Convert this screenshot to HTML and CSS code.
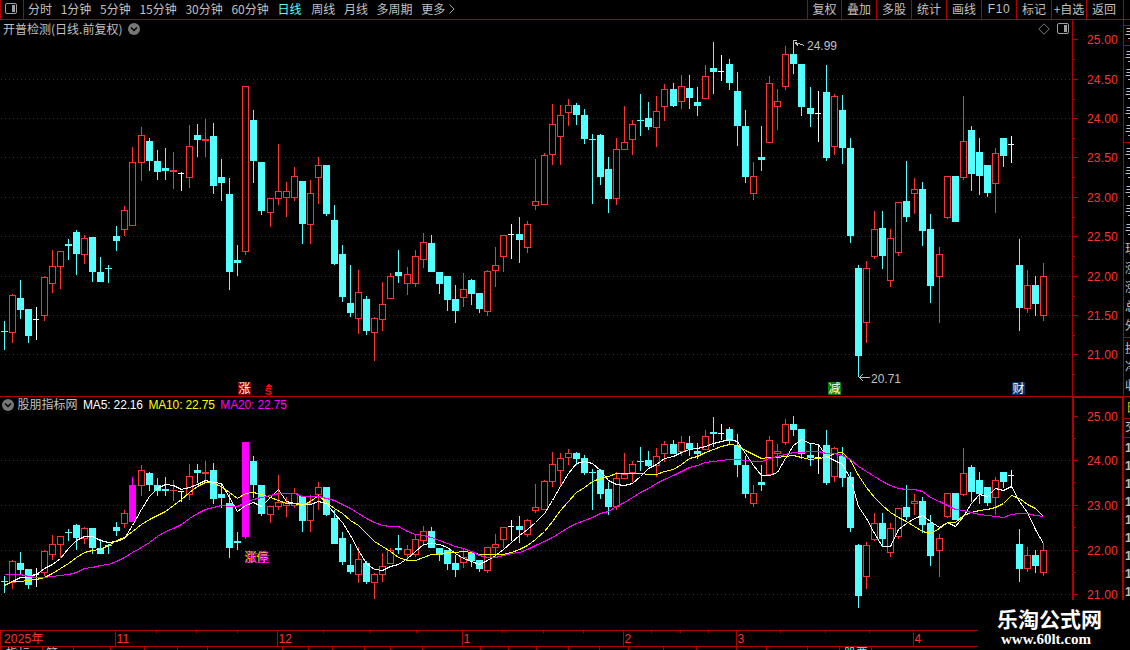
FILE: index.html
```html
<!DOCTYPE html>
<html lang="zh-CN">
<head>
<meta charset="utf-8">
<title>日线</title>
<link rel="stylesheet" href="styles.css">
</head>
<body>
<div class="app">
  <header class="toolbar">
    <div class="toggle"><svg width="13" height="12" viewBox="0 0 13 12"><rect class="icon-line" x=".5" y=".5" width="11" height="10" rx="1.5"/><rect class="icon-fill" x="7" y="2" width="3" height="7"/></svg></div>
    <nav class="periods">
      <span>分时</span><span>1分钟</span><span>5分钟</span><span>15分钟</span><span>30分钟</span><span>60分钟</span><span class="active">日线</span><span>周线</span><span>月线</span><span>多周期</span><span class="more">更多<svg width="6" height="10" viewBox="0 0 6 10"><path class="icon-line" d="M.5 .5L5 5L.5 9.5"/></svg></span>
    </nav>
    <nav class="tools">
      <span class="first">复权</span><span>叠加</span><span>多股</span><span>统计</span><span>画线</span><span class="latin">F10</span><span>标记</span><span>+自选</span><span class="last">返回</span>
    </nav>
  </header>
  <div class="workspace">
    <main class="charts">
      <section class="panel price">
        <svg id="price" class="plot" width="1123" height="376" viewBox="0 20 1123 376"></svg>
        <div class="caption">
          <span>开普检测(日线.前复权)</span>
          <svg width="12" height="12" viewBox="0 0 12 12"><circle class="knob" cx="6" cy="6" r="6"/><path class="knob-mark" d="M3 4.5L6 7.5L9 4.5"/></svg>
          <span class="caption-tools">
            <svg width="12" height="12" viewBox="0 0 12 12"><path class="icon-dim" d="M6 .8L11.2 6L6 11.2L.8 6Z"/></svg>
            <svg width="13" height="12" viewBox="0 0 13 12"><rect class="icon-line" x=".5" y=".5" width="11" height="10" rx="1.5"/><rect class="icon-fill" x="7" y="2" width="3" height="7"/></svg>
          </span>
        </div>
      </section>
      <section class="panel study">
        <svg id="study" class="plot" width="1123" height="254" viewBox="0 396 1123 254"></svg>
        <div class="caption">
          <svg width="12" height="12" viewBox="0 0 12 12"><circle class="knob" cx="6" cy="6" r="6"/><path class="knob-mark" d="M3 4.5L6 7.5L9 4.5"/></svg>
          <span>股朋指标网</span><span class="ma5">MA5: 22.16</span><span class="ma10">MA10: 22.75</span><span class="ma20">MA20: 22.75</span>
        </div>
      </section>
    </main>
    <aside class="quote">
      <div class="quote-head"></div>
      <div class="quote-name">手</div>
      <div class="quote-list"><span>手</span><span>手</span><span>手</span><span>手</span><span>手</span></div>
      <div class="quote-list"><span>手</span><span>手</span><span>手</span><span>手</span><span>手</span><span>现</span><span>涨</span><span>涨</span><span>总</span><span>外</span></div>
      <div class="quote-list tail"><span>换</span><span>净</span><span>收</span></div>
      <div class="quote-tab">日</div>
      <div class="quote-deal">交</div>
      <div class="quote-times"><span>1</span><span>1</span><span>1</span><span>1</span><span>1</span><span>1</span><span>1</span><span>1</span><span>1</span></div>
    </aside>
  </div>
  <div class="brand"><strong>乐淘公式网</strong><b>www.60lt.com</b></div>
</div>
<script src="chart.js"></script>
</body>
</html>
```
FILE: styles.css
```css
* { box-sizing: border-box; }
body { margin: 0; background: #000; }
.app {
  position: relative; width: 1130px; height: 650px; overflow: hidden;
  background: #000; color: #c0c0c0;
  font: 12px/16px "Liberation Sans", "Noto Sans CJK SC", sans-serif;
}
.toolbar { display: flex; height: 20px; border-bottom: 1px solid #b00000; }
.toggle { width: 24px; padding: 3px 0 0 4px; border: solid #b00000; border-width: 0 1px; line-height: 0; }
.periods { display: flex; gap: 8.7px; padding: 1px 0 0 4px; flex: 1; white-space: nowrap; font-family: "Noto Sans CJK SC", sans-serif; }
.periods .active { color: #54ffff; margin-right: 1px; }
.more svg { margin-left: 4px; }
.tools { display: flex; width: 323px; text-align: center; font-family: "Noto Sans CJK SC", sans-serif; white-space: nowrap; }
.tools span { width: 35px; flex: none; padding-top: 1px; border-left: 1px solid #b00000; }
.tools .first { width: 34px; }
.tools .last { width: 38px; padding-right: 2px; border-right: 1px solid #b00000; }
.tools .latin { font-family: "Liberation Sans", sans-serif; letter-spacing: .6px; }
.icon-line { fill: none; stroke: #a0a0a0; }
.icon-dim { fill: none; stroke: #777; }
.icon-fill { fill: #a0a0a0; }
.knob { fill: #777; }
.knob-mark { fill: none; stroke: #000; stroke-width: 1.5; }

.workspace { display: grid; grid-template-columns: 1123px 7px; height: 630px; }
.charts { display: grid; grid-template-rows: 376px 254px; }
.panel { display: grid; }
.panel > * { grid-area: 1 / 1; }
.plot { display: block; overflow: hidden; shape-rendering: crispEdges; }
.caption { display: flex; align-items: center; align-self: start; height: 18px; z-index: 1; white-space: nowrap; }
.price .caption { gap: 6px; padding-left: 3px; font-family: "Noto Sans CJK SC", sans-serif; }
.caption-tools { display: flex; gap: 7px; margin-left: auto; padding-right: 53px; }
.study .caption { gap: 5.5px; padding-left: 2px; }
.study .caption svg { margin-right: -2px; }
.ma5, .ma10, .ma20 { letter-spacing: -.15px; }
.ma5 { color: #fff; }
.ma10 { color: #ff0; }
.ma20 { color: #f0f; }

.plot text { font: 12px "Liberation Sans", "Noto Sans CJK SC", sans-serif; }
.rule { fill: #b00000; }
.grid { stroke: #b00000; stroke-dasharray: 1 3; }
.scale { fill: #ff3232; letter-spacing: .15px; }
.up { fill: none; stroke: #ff3232; }
.up-fill { fill: #ff3232; }
.down { fill: #54ffff; }
.flat { fill: #fff; }
.signal { fill: #f0f; }
.line { fill: none; stroke-width: 1; }
.line5 { stroke: #fff; }
.line10 { stroke: #ff0; }
.line20 { stroke: #f0f; }
.note { fill: #c0c0c0; }
.pointer { fill: none; stroke: #c0c0c0; }
.badge-rise { fill: #800000; }
.badge-cut { fill: #008000; }
.badge-report { fill: #003468; }
.badge-text { fill: #fff; }
.event { fill: none; stroke: #f00; stroke-width: 1.6; shape-rendering: geometricPrecision; }
.event-tip { fill: #f00; }
.tag-under { fill: #ff0; }
.tag-over { fill: #f0f; }

.quote { display: flex; flex-direction: column; overflow: hidden; height: 580px; border-left: 1px solid #b00000; }
.quote > div { flex: none; width: 30px; padding-left: 1px; border-bottom: 1px solid #b00000; }
.quote-head { height: 6px; }
.quote-name { height: 20px; }
.quote-list { height: 97px; display: flex; flex-direction: column; justify-content: space-evenly; }
.quote-list + .quote-list { height: 195px; }
.quote-list + .quote-list.tail { height: 59px; }
.quote > .quote-tab { height: 22px; padding-left: 2px; color: #cc0; line-height: 22px; }
.quote-deal { height: 19px; }
.quote > .quote-times { border: 0; display: flex; flex-direction: column; padding-top: 1px; font-weight: 700; }
.quote-times span { height: 18px; line-height: 18px; }

.brand {
  position: absolute; left: 978px; top: 600px; width: 152px; height: 50px;
  padding: 5px 0 0 19px; background: #000; color: #fff; white-space: nowrap;
}
.brand strong { display: block; font: 700 21px/27px "Noto Sans CJK SC", sans-serif; }
.brand b { display: block; padding-left: 4px; font: 700 15px/14px "Liberation Serif", serif; }
```
FILE: chart.js
```javascript
// Each bar: x centre, high, body top, body bottom, low, kind (u up, d down, f flat)
const bars = `4 321 331 332 350 d|12 294 295 333 343 u|20 280 298 310 319 d|28 309 309 336 343 d|36 307 319 320 340 f|44 276 277 316 321 u|52 250 266 284 293 u|60 251 251 267 289 u|68 239 244 246 260 d|76 230 232 254 275 d|84 235 238 255 264 u|92 237 237 272 282 d|100 257 272 282 282 d|108 265 268 269 283 d|116 226 236 241 251 d|124 206 210 230 236 u|132 147 162 226 226 u|141 127 135 163 181 u|149 138 141 161 171 d|157 150 161 172 180 d|165 148 168 171 180 d|173 152 170 172 189 u|181 172 173 174 191 f|189 125 146 178 188 u|197 124 135 140 157 d|205 119 139 141 157 u|213 123 136 186 194 d|221 159 177 183 201 d|229 178 194 272 290 d|237 245 260 263 276 d|245 86 86 252 255 u|253 110 120 161 183 d|261 162 162 211 215 d|270 198 198 213 227 u|278 144 191 199 205 u|286 182 191 198 217 u|294 167 176 198 201 u|302 181 181 224 244 d|310 180 193 225 244 u|318 157 165 178 204 u|326 165 165 214 216 d|334 205 220 264 265 d|342 245 254 297 302 d|350 265 303 313 317 d|358 270 292 319 334 u|366 296 299 331 335 d|374 317 318 333 361 u|382 282 304 320 331 u|390 273 276 299 299 u|398 250 272 276 283 d|407 267 274 284 295 u|415 250 256 284 287 u|423 233 242 260 268 u|431 235 243 272 272 d|439 272 272 284 294 d|447 276 276 300 311 d|455 285 299 311 323 d|463 273 289 298 307 u|471 279 280 294 305 d|479 293 293 309 313 d|487 270 271 312 316 u|495 247 265 271 287 u|503 235 235 257 272 u|511 224 234 235 259 f|519 217 234 240 263 d|527 221 224 248 253 u|535 159 201 206 210 u|544 153 155 205 205 u|552 104 124 155 165 u|560 105 115 137 165 u|568 99 105 113 126 u|576 103 105 115 125 d|584 109 115 139 144 d|592 134 139 140 204 d|600 134 135 177 185 d|608 157 169 199 213 d|616 138 149 199 205 u|624 106 142 150 150 u|632 120 124 140 155 u|640 94 120 121 136 d|648 102 118 127 130 d|656 96 111 128 147 u|664 84 89 107 121 u|673 83 89 106 107 d|681 75 86 102 109 u|689 75 88 98 109 d|697 87 102 106 116 d|705 65 76 99 99 u|713 42 68 72 94 d|721 55 71 72 81 f|729 59 64 83 90 d|737 72 91 126 146 d|745 110 126 177 183 d|753 162 176 194 200 u|761 126 157 160 171 d|769 76 83 143 143 u|777 89 101 107 130 u|785 46 54 87 90 u|793 40 54 64 74 d|801 64 64 107 116 d|810 87 108 114 127 d|818 91 113 114 142 f|826 65 92 158 161 d|834 94 96 147 155 u|842 95 110 148 164 d|850 138 148 236 243 d|858 265 268 356 377 d|866 261 268 323 343 u|874 211 229 257 259 u|882 211 228 256 269 d|890 229 238 281 287 u|898 202 202 253 256 u|906 161 201 217 222 d|914 178 189 194 214 u|922 182 189 231 246 d|930 214 229 286 303 d|939 247 254 277 323 u|947 176 176 218 219 u|955 176 176 222 222 d|963 96 141 178 180 u|971 126 130 174 191 d|979 138 152 176 195 d|987 165 165 193 197 d|995 148 153 184 213 u|1003 138 138 156 167 d|1011 136 144 145 163 f|1019 239 265 308 331 d|1027 270 285 309 313 u|1035 276 285 304 316 d|1043 263 276 316 321 u`
  .split('|').map(s => { const p = s.split(' '); return [...p.slice(0, 5).map(Number), p[5]]; });

const rect = (cls, x, y, w, h) => h > 0 ? `<rect class="${cls}" x="${x}" y="${y}" width="${w}" height="${h}"/>` : '';
const label = (cls, x, y, s) => `<text class="${cls}" x="${x}" y="${y}">${s}</text>`;
const scaleY = y => 460.2 + (y - 118) * 0.5686;
const low = y => Math.round(scaleY(y - 1)) + 1;
const high = y => Math.round(scaleY(y));

function candle(x, h, t, b, l, kind) {
  if (kind === 'u') {
    return rect('up-fill', x, h, 1, t - h) + rect('up-fill', x, b, 1, l - b) +
      (b - t < 3 ? rect('up-fill', x - 3, t, 7, b - t)
        : `<rect class="up" x="${x - 2.5}" y="${t + .5}" width="6" height="${b - t - 1}"/>`);
  }
  const cls = { d: 'down', f: 'flat', s: 'signal' }[kind];
  return rect(cls, x, h, 1, l - h) + rect(cls, x - 3, t, kind === 'f' ? 6 : 7, b - t);
}
const gridLine = y => `<path class="grid" d="M1 ${y + .5}H1072"/>`;

// Price panel
const marks = [39, 79, 118, 157, 197, 236, 276, 315, 354];
let out = marks.slice(1).map(gridLine).join('');
out += bars.map(b => candle(...b)).join('');
out += rect('rule', 1072, 20, 1, 376);
marks.forEach((y, i) => {
  out += rect('rule', 1073, y, 5, 1) + rect('rule', 1073, y + 20, 2, 1) +
    label('scale', 1087, y + 5, (25 - i * .5).toFixed(2));
});
out += '<path class="pointer" d="M804.5 45.5L795 42.5M793 43V40.5H797M795 42L798 46"/>' + label('note', 807, 50, '24.99');
out += '<path class="pointer" d="M870 377.5H859M863 374L859.5 377.5L863 381"/>' + label('note', 871, 383, '20.71');
[['rise', 238, '涨'], ['cut', 828, '减'], ['report', 1012, '财']].forEach(([k, x, s]) => {
  out += rect('badge-' + k, x, 382, 13, 13) + label('badge-text', x + .5, 393, s);
});
out += '<path class="event-tip" d="M265 387L268.5 383.5L272 387Z"/><path class="event" d="M271.3 389.6Q270.6 388.4 268.5 388.4Q266.3 388.4 266.3 389.8Q266.3 391 268.6 391.3Q271 391.7 271 393Q271 394.3 268.6 394.3Q266.3 394.3 265.7 393"/>';
document.getElementById('price').innerHTML = out;

// Study panel
out = [460, 505, 550, 594].map(gridLine).join('');
out += bars.map(([x, h, t, b, l, k]) =>
  candle(x, high(h), high(t), Math.max(low(b), high(t) + 1), low(l), x === 132 || x === 245 ? 's' : k)).join('');

const closes = bars.map(([, , t, b, , k]) => scaleY(k === 'u' ? t : b - 1));
function average(n, lead) {
  return bars.map((b, i) => {
    const y = i < n - 1 ? lead[i] : closes.slice(i - n + 1, i + 1).reduce((s, v) => s + v, 0) / n;
    return `${b[0] + .5},${Math.round(y) + .5}`;
  }).join(' ');
}
const curve = (n, lead) => `<polyline class="line line${n}" points="${average(n, lead)}"/>`;
out += curve(5, [585, 581, 577, 577]);
out += curve(10, [585, 581, 581, 580, 579, 577, 573, 568, 563]);
out += curve(20, [574, 574, 574, 576, 577, 577, 576, 575, 574, 572, 568, 567, 565, 564, 561, 557, 552, 547, 542]);
out += label('tag-under', 244.5, 562, '涨停') + label('tag-over', 245.5, 562, '放量');

out += rect('rule', 0, 396, 1072, 1) + rect('rule', 1072, 396, 51, 2);
out += rect('rule', 1072, 396, 2, 204) + rect('rule', 1122, 396, 1, 204);
[416, 460, 505, 550, 594].forEach((y, i) => {
  out += rect('rule', 1074, y, 4, 1) + label('scale', 1087, y + 5, (25 - i).toFixed(2));
  if (i < 4) out += rect('rule', 1074, y + 22, 2, 1);
});

// Date axis
out += rect('rule', 0, 630, 978, 1) + rect('rule', 0, 646, 978, 1) + rect('rule', 0, 630, 1, 16);
[[115, '11'], [277, '12'], [462, '1'], [623, '2'], [736, '3'], [913, '4']].forEach(([x, s]) => {
  out += rect('rule', x, 630, 1, 16) + label('scale', x + 1.5, 643, s);
});
out += label('scale', 4, 643, '2025年');
[156, 196, 237, 323, 370, 416, 502, 543, 583, 651, 680, 708, 780, 825, 869].forEach(x => { out += rect('rule', x, 631, 1, 2); });
[0, 42, 73, 110, 144, 177, 207, 282, 308, 332, 364, 390, 422, 480, 508, 536, 568, 599, 628, 663, 696, 736, 766, 807, 839, 871]
  .forEach(x => { out += rect('rule', x, 647, 1, 3); });
out += label('note', 6, 658, '指标') + label('note', 46, 658, '管') + label('down', 844, 658, '股票');
document.getElementById('study').innerHTML = out;
```
